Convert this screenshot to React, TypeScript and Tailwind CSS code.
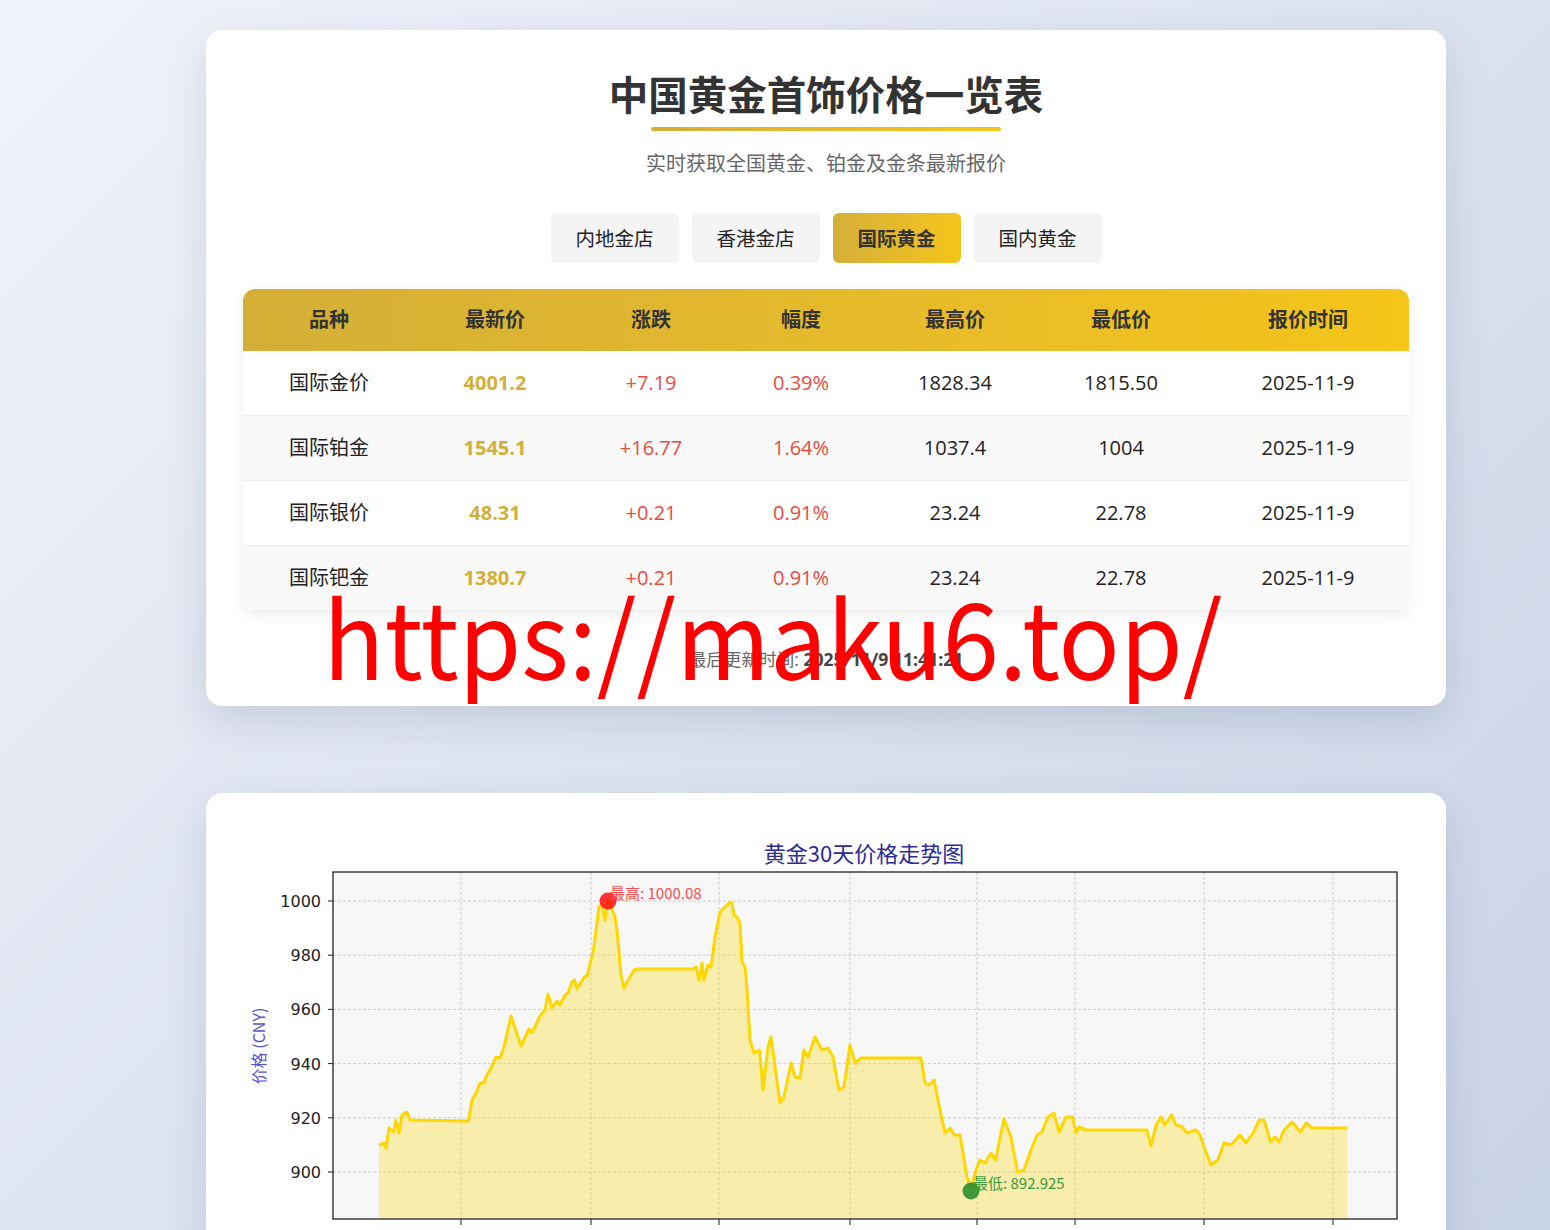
import React from "react";

const tabs = ["内地金店", "香港金店", "国际黄金", "国内黄金"];

const heads = ["品种", "最新价", "涨跌", "幅度", "最高价", "最低价", "报价时间"];
const widths = ["w-[172px]", "w-[160px]", "w-[152px]", "w-[148px]", "w-[160px]", "w-[172px]", "w-[202px]"];

const rows = [
  ["国际金价", "4001.2", "+7.19", "0.39%", "1828.34", "1815.50", "2025-11-9"],
  ["国际铂金", "1545.1", "+16.77", "1.64%", "1037.4", "1004", "2025-11-9"],
  ["国际银价", "48.31", "+0.21", "0.91%", "23.24", "22.78", "2025-11-9"],
  ["国际钯金", "1380.7", "+0.21", "0.91%", "23.24", "22.78", "2025-11-9"],
];

// traced from the 30-day price plot, page coordinates
const pts: [number, number][] = [
  [379, 1145], [385, 1143], [386, 1148], [389, 1128], [393.5, 1132], [396, 1120], [399, 1133], [402, 1115],
  [407, 1112], [410, 1120], [468.5, 1121], [472, 1100], [476, 1093], [480, 1083], [484, 1083], [486, 1077],
  [492, 1066], [496, 1057], [500, 1058], [504, 1047], [511, 1016], [521, 1046], [529, 1029], [532, 1033],
  [540, 1016], [545, 1010], [548, 994], [552, 1008], [557, 1001], [560, 1005], [565, 995], [568, 993],
  [572, 982], [574.5, 980], [577, 989], [581, 982], [584.5, 977], [587, 976], [593.5, 950], [599, 907],
  [602, 905], [605, 920], [608, 900], [611, 907], [615, 917], [617, 930], [621, 975], [624, 988],
  [627, 982], [630, 977], [634, 970], [638, 969], [693.5, 969], [696, 967], [699, 980], [702, 963],
  [704, 980], [708, 965], [711, 967], [715, 937], [720, 912], [725, 907], [730, 902], [732, 903],
  [734, 915], [737, 917], [740, 923], [742, 962], [745, 967], [747, 990], [750, 1040], [754, 1053],
  [759.5, 1050], [763, 1090], [768, 1047], [771, 1037], [780, 1103], [784, 1097], [791, 1063], [795, 1077],
  [800, 1078], [804, 1050], [808, 1057], [815, 1037], [822, 1050], [828, 1048], [833, 1057], [839, 1090],
  [844, 1087], [850, 1045], [855, 1063], [861, 1058], [921, 1058], [925, 1083], [929, 1085], [934, 1080],
  [940, 1110], [945, 1133], [950, 1128], [954.5, 1135], [960, 1135], [967, 1177], [971, 1188], [976, 1170],
  [980, 1160], [985, 1163], [991, 1153], [995.5, 1160], [1004, 1119], [1011, 1137], [1017.5, 1172], [1024, 1170],
  [1031, 1150], [1037, 1135], [1042, 1132], [1048, 1117], [1054, 1113], [1059, 1132], [1066, 1117], [1072.5, 1117],
  [1076, 1133], [1079, 1127], [1086, 1130], [1147, 1130], [1151, 1146], [1156, 1125], [1161, 1117], [1165, 1125],
  [1171.5, 1115], [1176, 1125], [1182.5, 1127], [1187, 1133], [1196, 1130], [1200, 1135], [1204.5, 1148], [1211, 1165],
  [1218, 1160], [1224, 1143], [1231, 1145], [1240, 1135], [1246, 1143], [1253, 1133], [1259.5, 1120], [1264, 1120],
  [1270.5, 1142], [1275, 1137], [1279, 1142], [1284, 1130], [1292, 1122], [1300.5, 1132], [1306, 1123], [1312, 1128],
  [1347.5, 1128],
];

const line = pts.map((p, i) => (i ? "L" : "M") + p[0] + " " + p[1]).join(" ");
const area = line + " L1347.5 1219 L379 1219 Z";

const yTicks = [1000, 980, 960, 940, 920, 900];
const xGrid = [461, 591, 719, 850, 977, 1075, 1204, 1333];

function Chart() {
  return (
    <svg width="1240" height="480" viewBox="206 793 1240 480" className="block">
      <text x="864" y="862" textAnchor="middle" fontSize="22" fill="#2c2c96" fontFamily="'Noto Sans CJK SC', sans-serif">
        黄金30天价格走势图
      </text>
      <rect x="333" y="872" width="1064" height="347" fill="#f7f7f7" />
      {yTicks.map((v, i) => {
        const y = 901 + i * 54.2;
        return (
          <g key={v}>
            <line x1="333" x2="1397" y1={y} y2={y} stroke="#c4c4c4" strokeWidth="0.8" strokeDasharray="3 2" />
            <line x1="328" x2="333" y1={y} y2={y} stroke="#222" strokeWidth="1" />
            <text x="321" y={y + 6} textAnchor="end" fontSize="16" fill="#222" fontFamily="'DejaVu Sans', sans-serif">
              {v}
            </text>
          </g>
        );
      })}
      {xGrid.map((x) => (
        <g key={x}>
          <line x1={x} x2={x} y1="872" y2="1219" stroke="#c4c4c4" strokeWidth="0.8" strokeDasharray="3 2" />
          <line x1={x} x2={x} y1="1219" y2="1225" stroke="#222" strokeWidth="1" />
        </g>
      ))}
      <path d={area} fill="#ffd700" fillOpacity="0.3" />
      <path d={line} fill="none" stroke="#ffd700" strokeWidth="3" strokeLinejoin="round" />
      <rect x="333" y="872" width="1064" height="347" fill="none" stroke="#222" strokeWidth="1.3" />
      <circle cx="608" cy="901" r="8.5" fill="#ff0000" fillOpacity="0.8" />
      <text x="610" y="899" fontSize="15" fill="#ff4b4b" fontFamily="'Noto Sans CJK SC', sans-serif">
        最高: 1000.08
      </text>
      <circle cx="971" cy="1191" r="8.5" fill="#2a8f2a" fillOpacity="0.9" />
      <text x="973" y="1189" fontSize="15" fill="#3a9a3a" fontFamily="'Noto Sans CJK SC', sans-serif">
        最低: 892.925
      </text>
      <text
        x="261"
        y="1046"
        transform="rotate(-90 261 1046)"
        textAnchor="middle"
        dominantBaseline="middle"
        fontSize="16"
        fill="#5555cc"
        fontFamily="'Noto Sans CJK SC', sans-serif"
      >
        价格 (CNY)
      </text>
    </svg>
  );
}

export default function App() {
  return (
    <div className="relative min-h-screen bg-fixed bg-[linear-gradient(135deg,#f0f3fa_0%,#c9d3e6_100%)] pl-[206px] pt-[30px] pb-[60px] font-['Open_Sans','Noto_Sans_CJK_SC',sans-serif] text-[#222]">
      <div className="w-[1240px] rounded-[16px] bg-white px-[37px] pt-[39px] pb-[35px] shadow-[0_15px_40px_rgba(60,72,100,0.16)]">
        <div className="flex flex-col items-center">
          <h1 className="text-[39.5px] leading-[48px] font-bold text-[#333] font-['Noto_Sans_CJK_SC',sans-serif]">
            中国黄金首饰价格一览表
          </h1>
          <div className="mt-[10px] h-[4px] w-[350px] rounded-full bg-gradient-to-r from-[#d4af37] to-[#f5c518]" />
          <p className="mt-[20px] text-[20px] leading-[26px] text-[#666]">实时获取全国黄金、铂金及金条最新报价</p>
          <div className="mt-[36px] flex gap-[13px]">
            {tabs.map((t) => (
              <button
                key={t}
                className={
                  t === "国际黄金"
                    ? "h-[50px] w-[128px] rounded-[6px] bg-gradient-to-r from-[#d4af37] to-[#f5c518] pt-[2px] text-[19.5px] font-bold text-[#333]"
                    : "h-[50px] w-[128px] rounded-[6px] bg-[#f4f4f4] pt-[2px] text-[19.5px] text-[#222]"
                }
              >
                {t}
              </button>
            ))}
          </div>
        </div>

        <div className="mt-[26px] overflow-hidden rounded-[12px] shadow-[0_4px_16px_rgba(0,0,0,0.07)]">
          <div className="flex h-[62px] items-center bg-gradient-to-r from-[#d4af37] to-[#f5c518] text-[20px] font-bold text-[#333]">
            {heads.map((h, i) => (
              <div key={h} className={widths[i] + " text-center"}>
                {h}
              </div>
            ))}
          </div>
          {rows.map((r, ri) => (
            <div
              key={r[0]}
              className={
                (ri % 2 ? "bg-[#f9f9f9]" : "bg-white") +
                " flex h-[65px] items-center border-b border-[#eeeeee] text-[20px]"
              }
            >
              <div className={widths[0] + " text-center"}>{r[0]}</div>
              <div className={widths[1] + " text-center font-bold text-[#d4af37]"}>{r[1]}</div>
              <div className={widths[2] + " text-center text-[#e74c3c]"}>{r[2]}</div>
              <div className={widths[3] + " text-center text-[#e74c3c]"}>{r[3]}</div>
              <div className={widths[4] + " text-center"}>{r[4]}</div>
              <div className={widths[5] + " text-center"}>{r[5]}</div>
              <div className={widths[6] + " text-center"}>{r[6]}</div>
            </div>
          ))}
        </div>

        <p className="mt-[36px] text-center text-[17.6px] leading-[24px] text-[#666]">
          最后更新时间: <span className="font-bold text-[#444]">2025/11/9 11:41:21</span>
        </p>
      </div>

      <div className="mt-[87px] h-[560px] w-[1240px] overflow-hidden rounded-[16px] bg-white shadow-[0_15px_40px_rgba(60,72,100,0.16)]">
        <Chart />
      </div>

      <div className="pointer-events-none absolute left-[323px] top-[581px] origin-left scale-x-[0.955] text-[106px] leading-none text-[#ff0000] font-['Noto_Sans_CJK_SC',sans-serif]">
        https://maku6.top/
      </div>
    </div>
  );
}
